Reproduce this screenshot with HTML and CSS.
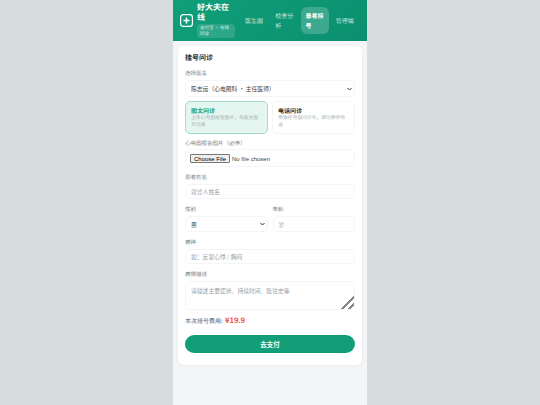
FILE: index.html
```html
<!DOCTYPE html>
<html>
<head>
<meta charset="utf-8">
<title>好大夫在线</title>
<link rel="stylesheet" href="styles.css">
</head>
<body>
<div class="phone">
	<div class="header">
		<div class="logo">
			<svg width="13" height="13" viewBox="0 0 13 13">
				<rect x="0.6" y="0.6" width="11.8" height="11.8" rx="2.6" fill="none" stroke="#fff" stroke-width="1.2"/>
				<path d="M6.5 3.5v6M3.5 6.5h6" stroke="#fff" stroke-width="1.4"/>
			</svg>
		</div>
		<div class="brand">
			<div class="brand-name">好大夫在线</div>
			<div class="brand-tag">支付宝 · 在线问诊</div>
		</div>
		<div class="nav">
			<a class="nav-item">医生圈</a>
			<a class="nav-item">检查分析</a>
			<a class="nav-item active">患者挂号</a>
			<a class="nav-item">管理端</a>
		</div>
	</div>
	<div class="card">
		<h2>挂号问诊</h2>
		<label>选择医生</label>
		<select class="field select">
			<option>陈志远（心电图科 · 主任医师）</option>
		</select>
		<div class="types">
			<div class="type selected">
				<div class="type-title">图文问诊</div>
				<div class="type-desc">上传心电图报告图片，与医生图文沟通</div>
			</div>
			<div class="type">
				<div class="type-title">电话问诊</div>
				<div class="type-desc">单独挂电话问诊号，填写接听电话</div>
			</div>
		</div>
		<label class="tight">心电图报告图片（必传）</label>
		<div class="field file"><input type="file"></div>
		<label>患者姓名</label>
		<input class="field" placeholder="就诊人姓名">
		<div class="two">
			<div>
				<label>性别</label>
				<select class="field select short"><option>男</option></select>
			</div>
			<div>
				<label>年龄</label>
				<input class="field short" placeholder="岁">
			</div>
		</div>
		<label>病种</label>
		<input class="field" placeholder="如：反复心悸 / 胸闷">
		<label>病情描述</label>
		<textarea class="field area" placeholder="请描述主要症状、持续时间、既往史等"></textarea>
		<div class="fee">本次挂号费用: <span class="price">¥19.9</span></div>
		<button class="pay">去支付</button>
	</div>
</div>
</body>
</html>
```

FILE: styles.css
```css
* {
	box-sizing: border-box;
}
html, body {
	height: 100%;
}
body {
	margin: 0;
	background-color: #d7dcde;
	font-family: "Noto Sans CJK SC", "Liberation Sans", sans-serif;
	color: #1f2a30;
	overflow: hidden;
	text-rendering: geometricPrecision;
}
.phone {
	width: 194px;
	height: 405px;
	margin: 0 auto;
	background-color: #f3f5f7;
}
.header {
	height: 41px;
	display: flex;
	align-items: center;
	padding: 0 8px 0 7px;
	background: linear-gradient(135deg, #0f9f7a, #0c8f70);
	color: #fff;
}
.logo {
	width: 13px;
	height: 13px;
	flex: none;
	margin-right: 4px;
}
.logo svg {
	display: block;
}
.brand {
	width: 38px;
	flex: none;
	margin-right: 5px;
}
.brand-name {
	font-size: 8px;
	line-height: 10px;
	font-weight: 700;
}
.brand-tag {
	margin-top: 1px;
	padding: 1px 3px;
	font-size: 4.5px;
	line-height: 6px;
	background-color: rgba(255,255,255,0.16);
	border-radius: 4px;
	opacity: 0.85;
}
.nav {
	flex: 1;
	display: flex;
	align-items: center;
	gap: 2px;
}
.nav-item {
	flex: 1;
	padding: 4px 5px;
	font-size: 6px;
	line-height: 9.5px;
	border-radius: 6px;
	color: rgba(255,255,255,0.78);
}
.nav-item.active {
	background-color: rgba(255,255,255,0.2);
	color: #fff;
	font-weight: 700;
}
.card {
	margin: 5px 5px 0;
	padding: 7px 7px 9px;
	height: 319px;
	background-color: #fff;
	border-radius: 6px;
	box-shadow: 0 1px 4px rgba(0,0,0,0.04);
}
h2 {
	margin: 0 0 6px;
	font-size: 7px;
	line-height: 10px;
	font-weight: 700;
}
label {
	display: block;
	margin-bottom: 3px;
	font-size: 5.5px;
	line-height: 8px;
	color: #7a848c;
}
label.tight {
	margin-bottom: 2px;
}
.field {
	display: block;
	width: 100%;
	height: 15px;
	margin-bottom: 6px;
	padding: 0 5px;
	border: 1px solid #f3f5f6;
	border-radius: 5px;
	background-color: #fff;
	font-family: inherit;
	font-size: 5.8px;
	color: #3c464e;
	outline: none;
}
.field::placeholder {
	color: #9aa2a9;
}
.select {
	height: 17px;
	margin-bottom: 4px;
	appearance: none;
	background-image: url("data:image/svg+xml,%3Csvg xmlns='http://www.w3.org/2000/svg' width='5' height='4'%3E%3Cpath d='M.5 1l2 2 2-2' fill='none' stroke='%23333' stroke-width='1'/%3E%3C/svg%3E");
	background-repeat: no-repeat;
	background-position: right 2px center;
}
.select.short {
	height: 16px;
	margin-bottom: 6px;
}
.short {
	height: 16px;
}
.types {
	display: flex;
	gap: 4px;
	margin-bottom: 5px;
}
.type {
	flex: 1;
	height: 33px;
	padding: 5px 5px 0;
	border: 1px solid #f3f5f6;
	border-radius: 5px;
}
.type.selected {
	background-color: #e4f6ef;
	border-color: #a3dcc8;
}
.type-title {
	font-size: 6px;
	line-height: 7px;
	font-weight: 700;
}
.selected .type-title {
	color: #0f9f7a;
}
.type-desc {
	margin-top: 1px;
	font-size: 4.8px;
	line-height: 6.5px;
	color: #a9b0b6;
}
.file {
	height: 18px;
	display: flex;
	align-items: center;
	padding: 0 4px;
}
.file input {
	font-family: "Liberation Sans", sans-serif;
	font-size: 6px;
	width: 100%;
}
.file input::file-selector-button {
	height: 9px;
	margin-right: 2px;
	padding: 0 3px;
	border: 0.5px solid #777;
	border-radius: 1px;
	background-color: #efefef;
	font-size: 6px;
	line-height: 8px;
}
.two {
	display: grid;
	grid-template-columns: 1fr 1fr;
	gap: 5px;
}
.area {
	height: 29px;
	padding: 4px 5px;
	margin-bottom: 6px;
	resize: vertical;
}
.area::-webkit-resizer {
	background: linear-gradient(135deg, transparent 55%, #888 55%, #888 65%, transparent 65%, transparent 78%, #888 78%, #888 88%, transparent 88%);
}
.fee {
	font-size: 6px;
	line-height: 10px;
	color: #5a646c;
	margin-bottom: 9px;
}
.price {
	margin-left: 1px;
	font-family: "Liberation Sans", sans-serif;
	font-size: 8px;
	font-weight: 700;
	color: #ef5350;
}
.pay {
	display: block;
	width: 100%;
	height: 18px;
	border: 0;
	border-radius: 9px;
	background-color: #119e79;
	color: #fff;
	font-family: inherit;
	font-size: 6.5px;
	font-weight: 700;
}
```
